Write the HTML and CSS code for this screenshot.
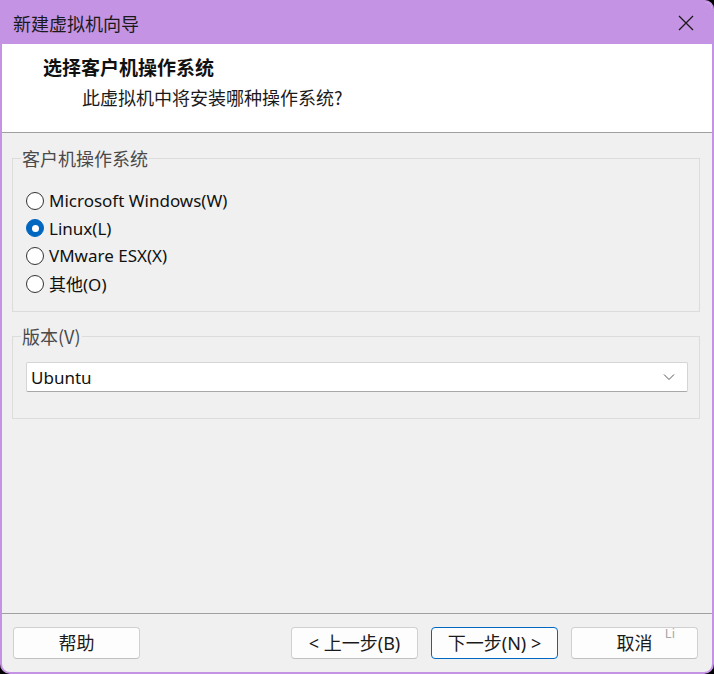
FILE: index.html
```html
<!DOCTYPE html>
<html lang="zh-CN">
<head>
<meta charset="utf-8">
<title>新建虚拟机向导</title>
<link rel="stylesheet" href="styles.css">
</head>
<body>
<div class="window">
  <div class="titlebar">
    <span class="title">新建虚拟机向导</span>
    <svg class="close" width="16" height="16" viewBox="0 0 16 16"><path d="M1 1 L15 15 M15 1 L1 15" stroke="#1a1a1a" stroke-width="1.3" fill="none"/></svg>
  </div>
  <div class="header">
    <div class="h-title">选择客户机操作系统</div>
    <div class="h-sub">此虚拟机中将安装哪种操作系统?</div>
  </div>
  <div class="content">
    <fieldset class="group g1">
      <legend>客户机操作系统</legend>
      <div class="radios">
        <div class="radio"><span class="dot"></span><span>Microsoft Windows(W)</span></div>
        <div class="radio checked"><span class="dot"></span><span>Linux(L)</span></div>
        <div class="radio"><span class="dot"></span><span>VMware ESX(X)</span></div>
        <div class="radio"><span class="dot"></span><span>其他(O)</span></div>
      </div>
    </fieldset>
    <fieldset class="group g2">
      <legend>版本(V)</legend>
      <div class="select">
        <span>Ubuntu</span>
        <svg width="12" height="8" viewBox="0 0 12 8"><path d="M1 1.5 L6 6.5 L11 1.5" stroke="#555" stroke-width="1" fill="none"/></svg>
      </div>
    </fieldset>
  </div>
  <div class="footer">
    <button class="btn">帮助</button>
    <div class="spacer"></div>
    <button class="btn">&lt; 上一步(B)</button>
    <button class="btn primary">下一步(N) &gt;</button>
    <button class="btn cancel">取消<span class="li">Li</span></button>
  </div>
</div>
</body>
</html>
```
FILE: styles.css
```css
html, body {
  margin: 0;
  padding: 0;
  background: #000;
}
.window {
  width: 714px;
  height: 674px;
  box-sizing: border-box;
  border: 2px solid #c593e3;
  border-radius: 0 9px 10px 10px;
  background: #f0f0f0;
  display: flex;
  flex-direction: column;
  overflow: hidden;
  font-family: "Noto Sans", "Noto Sans CJK SC", sans-serif;
  color: #111;
}
.titlebar {
  height: 42px;
  flex: none;
  background: #c593e3;
  display: flex;
  align-items: center;
  padding: 0 18px 0 11px;
  margin-top: -2px;
  padding-top: 2px;
}
.title {
  font-family: "Noto Sans CJK SC", sans-serif;
  font-size: 18px;
  color: #1a1a1a;
  flex: 1;
}
.close {
  display: block;
}
.header {
  height: 89px;
  flex: none;
  background: #fff;
  border-bottom: 1px solid #a0a0a0;
  box-sizing: border-box;
  padding: 10px 0 0 41px;
  font-family: "Noto Sans CJK SC", sans-serif;
}
.h-title {
  font-size: 19px;
  font-weight: bold;
  line-height: 26px;
}
.h-sub {
  font-size: 18px;
  line-height: 26px;
  margin-top: 4px;
  padding-left: 39px;
  color: #1a1a1a;
}
.content {
  flex: 1;
  padding: 13px 12px 0 10px;
  border-bottom: 1px solid #a0a0a0;
}
.group {
  margin: 0;
  border: 1px solid #dcdcdc;
  padding: 0 11px 0 13px;
}
.group legend {
  font-family: "Noto Sans CJK SC", sans-serif;
  font-size: 18px;
  line-height: 24px;
  color: #4a4a4a;
  padding: 0 1px;
  margin-left: -5px;
}
.g1 {
  height: 166px;
  box-sizing: border-box;
}
.radios {
  padding-top: 17px;
  display: flex;
  flex-direction: column;
}
.radio {
  height: 27.6px;
  display: flex;
  align-items: center;
  font-size: 17px;
  gap: 5px;
}
.dot {
  width: 18px;
  height: 18px;
  box-sizing: border-box;
  border: 1px solid #333;
  border-radius: 50%;
  background: #fff;
  flex: none;
}
.radio.checked .dot {
  background: #0067c0;
  border-color: #0067c0;
  display: flex;
  align-items: center;
  justify-content: center;
}
.radio.checked .dot::after {
  content: "";
  width: 7px;
  height: 7px;
  border-radius: 50%;
  background: #fff;
}
.g2 {
  margin-top: 12px;
  height: 95px;
  box-sizing: border-box;
}
.select {
  margin-top: 14px;
  height: 30px;
  box-sizing: border-box;
  background: #fff;
  border: 1px solid #d5d5d5;
  border-bottom-color: #a8a8a8;
  border-radius: 2px;
  display: flex;
  align-items: center;
  justify-content: space-between;
  padding: 0 12px 0 4px;
  font-size: 17px;
}
.footer {
  height: 58px;
  box-sizing: border-box;
  flex: none;
  display: flex;
  align-items: flex-start;
  padding: 13px 14px 0 11px;
  gap: 13px;
}
.spacer {
  flex: 1;
}
.btn {
  width: 127px;
  height: 32px;
  box-sizing: border-box;
  background: #fdfdfd;
  border: 1px solid #d0d0d0;
  border-bottom-color: #c0c0c0;
  border-radius: 4px;
  font-family: "Noto Sans", "Noto Sans CJK SC", sans-serif;
  font-size: 18px;
  line-height: 28px;
  color: #1a1a1a;
  padding: 0;
}
.btn.primary {
  border-color: #0067c0;
}
.cancel {
  position: relative;
}
.li {
  position: absolute;
  right: 22px;
  top: -3px;
  font-size: 13px;
  line-height: 16px;
  color: #a8a8a8;
}
```
